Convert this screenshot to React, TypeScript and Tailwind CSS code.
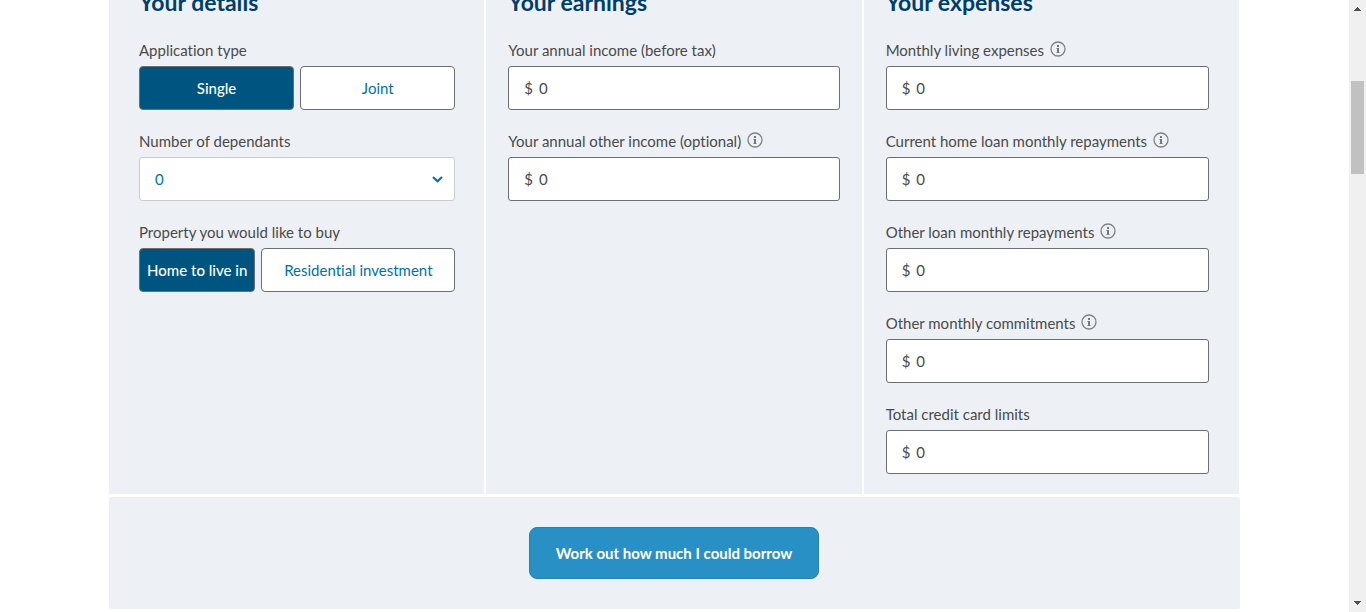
import { useId, useState } from "react";

const label = "text-[15px] leading-6 whitespace-nowrap text-[#4a4a4a]";

function InfoIcon() {
  return (
    <svg width="16" height="16" viewBox="0 0 16 16" fill="none" aria-hidden="true">
      <circle cx="8" cy="8" r="7" stroke="#808285" strokeWidth="1.3" />
      <path d="M7 4h2v2H7zM6.5 7H9v4h.5v1h-3v-1H7V8h-.5z" fill="#77787b" />
    </svg>
  );
}

function MoneyField({ title, info = false }: { title: string; info?: boolean }) {
  const id = useId();
  const [value, setValue] = useState("0");
  return (
    <div>
      <div className="mb-1 flex h-6 items-center gap-1.5">
        <label htmlFor={id} className={label}>{title}</label>
        {info && (
          <button type="button" aria-label={`About ${title}`} className="pb-0.5">
            <InfoIcon />
          </button>
        )}
      </div>
      <div className="flex h-11 items-center gap-1.5 rounded-[3px] border border-[#6d6e71] bg-white px-[15px] text-[15px] leading-6 text-[#4a4a4a]">
        <span>$</span>
        <input
          id={id}
          type="text"
          inputMode="numeric"
          value={value}
          onChange={(e) => setValue(e.target.value)}
          className="min-w-0 flex-1 bg-transparent outline-none"
        />
      </div>
    </div>
  );
}

function Choice({ title, options, columns }: { title: string; options: string[]; columns: string }) {
  const id = useId();
  const [selected, setSelected] = useState(0);
  return (
    <div role="group" aria-labelledby={id}>
      <div id={id} className={`mb-1 ${label}`}>{title}</div>
      <div className={`grid gap-1.5 ${columns}`}>
        {options.map((option, i) => (
          <button
            key={option}
            type="button"
            aria-pressed={i === selected}
            onClick={() => setSelected(i)}
            className={`h-11 rounded-[4px] border border-[#6d6e71] text-[15px] leading-6 whitespace-nowrap ${
              i === selected ? "bg-[#005580] font-medium text-white" : "bg-white text-[#006fad]"
            }`}
          >
            {option}
          </button>
        ))}
      </div>
    </div>
  );
}

function Dependants() {
  const id = useId();
  return (
    <div>
      <label htmlFor={id} className={`mb-1 block ${label}`}>Number of dependants</label>
      <div className="grid items-center">
        <select
          id={id}
          className="col-start-1 row-start-1 h-11 w-full appearance-none rounded-[3px] border border-[#cccccc] bg-white px-[15px] text-[15px] text-[#006fad]"
        >
          <option>0</option>
          <option>1</option>
          <option>2</option>
          <option>3</option>
          <option>4</option>
        </select>
        <svg
          className="pointer-events-none col-start-1 row-start-1 mr-3 justify-self-end"
          width="11"
          height="8"
          viewBox="0 0 11 8"
          fill="none"
          aria-hidden="true"
        >
          <path d="M1 2l4.5 4.2L10 2" stroke="#006fad" strokeWidth="2.1" />
        </svg>
      </div>
    </div>
  );
}

function Panel({ title, padding, children }: { title: string; padding: string; children: React.ReactNode }) {
  return (
    <section className={`bg-[#edf1f6] pb-5 ${padding}`}>
      <h2 className="mb-5 text-[23px] leading-8 font-bold whitespace-nowrap text-[#003e69]">{title}</h2>
      <div className="flex flex-col gap-[19px]">{children}</div>
    </section>
  );
}

function Scrollbar() {
  return (
    <div className="flex w-[17px] shrink-0 flex-col items-center bg-[#f0f0f0] py-[7px]" aria-hidden="true">
      <svg width="7" height="4" viewBox="0 0 7 4" shapeRendering="crispEdges">
        <path d="M3 0h1v1h1v1h1v1h1v1H0V3h1V2h1V1h1z" fill="#505050" />
      </svg>
      <div className="mt-[70px] h-[93px] w-[13px] bg-[#c1c1c1]" />
      <svg className="mt-auto" width="7" height="4" viewBox="0 0 7 4" shapeRendering="crispEdges">
        <path d="M0 0h7v1H6v1H5v1H4v1H3V3H2V2H1V1H0z" fill="#505050" />
      </svg>
    </div>
  );
}

export default function App() {
  return (
    <div className="flex h-screen bg-white font-[Lato,sans-serif] [font-variant-ligatures:none]">
      <main className="min-w-0 flex-1 overflow-hidden">
        <form className="mx-auto -mt-3.5 max-w-[1131px]" onSubmit={(e) => e.preventDefault()}>
          <div className="grid grid-cols-3 gap-0.5 pr-px">
            <Panel title="Your details" padding="pl-[30px] pr-[29px]">
              <Choice title="Application type" options={["Single", "Joint"]} columns="grid-cols-2" />
              <Dependants />
              <Choice
                title="Property you would like to buy"
                options={["Home to live in", "Residential investment"]}
                columns="grid-cols-[3fr_5fr]"
              />
            </Panel>
            <Panel title="Your earnings" padding="px-[22px]">
              <MoneyField title="Your annual income (before tax)" />
              <MoneyField title="Your annual other income (optional)" info />
            </Panel>
            <Panel title="Your expenses" padding="pl-[22px] pr-[30px]">
              <MoneyField title="Monthly living expenses" info />
              <MoneyField title="Current home loan monthly repayments" info />
              <MoneyField title="Other loan monthly repayments" info />
              <MoneyField title="Other monthly commitments" info />
              <MoneyField title="Total credit card limits" />
            </Panel>
          </div>
          <div className="mt-[3px] flex justify-center rounded-[2px] bg-[#edf1f6] py-[30px] pr-px">
            <button
              type="submit"
              className="h-[52px] w-[290px] rounded-lg border border-[#2582b3] bg-[#2990c5] text-[15px] font-bold whitespace-nowrap text-white"
            >
              Work out how much I could borrow
            </button>
          </div>
        </form>
      </main>
      <Scrollbar />
    </div>
  );
}
